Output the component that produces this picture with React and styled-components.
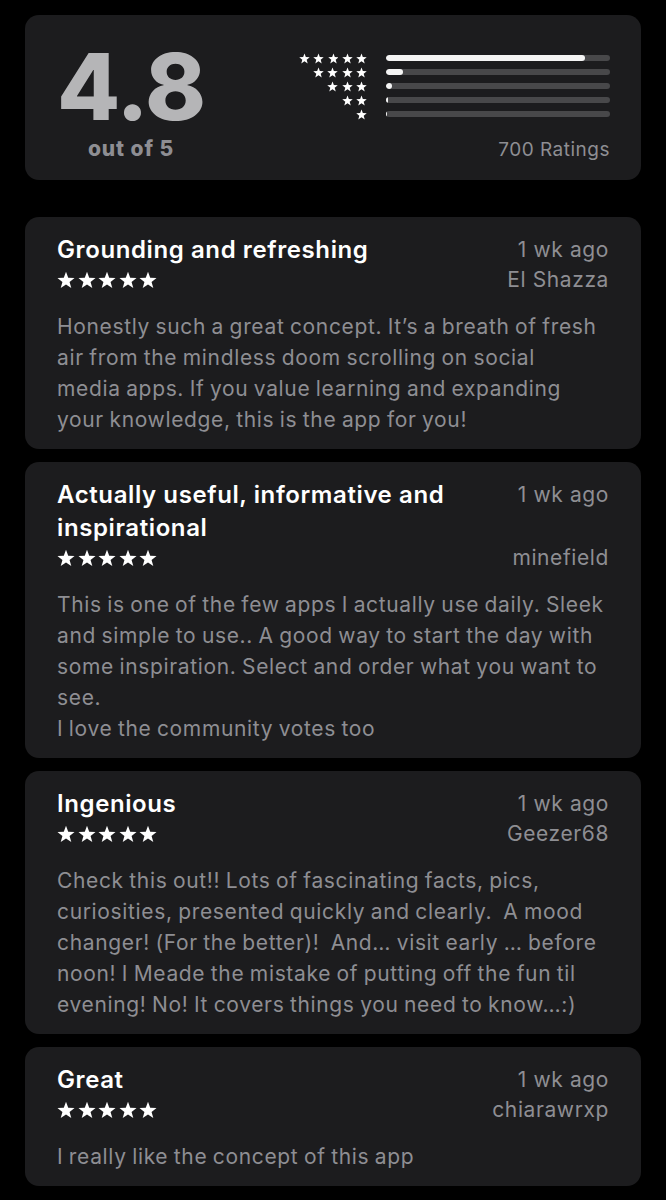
import styled, { createGlobalStyle } from "styled-components"

const Global = createGlobalStyle`
  html, body {
    margin: 0;
    background: #000;
  }
  body {
    font-family: Inter, "Noto Sans", sans-serif;
    -webkit-font-smoothing: antialiased;
  }
`

const Page = styled.main`
  width: 666px;
  box-sizing: border-box;
  padding: 15px 25px 12px;
  display: flex;
  flex-direction: column;
  gap: 13px;
`

const Summary = styled.section`
  background: #1c1c1e;
  border-radius: 14px;
  height: 165px;
  box-sizing: border-box;
  padding: 0 31px 0 31px;
  display: flex;
  margin-bottom: 24px;
`

const ScoreCol = styled.div`
  width: 150px;
  display: flex;
  flex-direction: column;
  align-items: center;
  padding-top: 32px;
`

const Score = styled.div`
  font-size: 92px;
  line-height: 80px;
  font-weight: 800;
  color: #b5b5b7;
  letter-spacing: -1px;
`

const OutOf = styled.div`
  margin-top: 10px;
  font-size: 21px;
  line-height: 24px;
  font-weight: 800;
  color: #8e8e93;
  letter-spacing: 0.9px;
`

const HistCol = styled.div`
  margin-left: auto;
  width: 311px;
  padding-top: 36px;
  display: flex;
  flex-direction: column;
`

const Histogram = styled.div`
  display: grid;
  grid-template-columns: 68px 1fr;
  column-gap: 19px;
  grid-auto-rows: 14px;
  align-items: center;
`

const Track = styled.div`
  height: 6px;
  border-radius: 3px;
  background: #48484a;
  overflow: hidden;
`

const Fill = styled.div`
  height: 100%;
  border-radius: 3px;
  background: #f4f4f4;
`

const RatingsCount = styled.div`
  margin-top: 17px;
  text-align: right;
  font-size: 19px;
  line-height: 24px;
  letter-spacing: 0.5px;
  color: #8e8e93;
`

const Stars = styled.div`
  display: flex;
  justify-content: ${(p) => (p.$end ? "flex-end" : "flex-start")};
  gap: ${(p) => p.$gap}px;
  height: ${(p) => p.$size}px;
`

const StarSvg = styled.svg`
  width: ${(p) => p.$size}px;
  height: ${(p) => p.$size}px;
  display: block;
  fill: #fff;
`

const Card = styled.article`
  background: #1c1c1e;
  border-radius: 14px;
  padding: 16px 32px 14px;
`

const Head = styled.div`
  display: grid;
  grid-template-columns: 1fr auto;
  column-gap: 30px;
  align-items: center;
`

const Title = styled.h2`
  margin: 0;
  font-size: 24px;
  line-height: 33px;
  font-weight: 600;
  letter-spacing: 0.6px;
  color: #fff;
  align-self: start;
`

const Meta = styled.div`
  font-size: 21px;
  line-height: ${(p) => p.$lh}px;
  letter-spacing: 0.6px;
  color: #8e8e93;
  text-align: right;
  align-self: ${(p) => p.$self || "center"};
`

const StarCell = styled.div`
  height: 28px;
  display: flex;
  align-items: center;
`

const Body = styled.p`
  margin: 17px 3px 0 0;
  font-size: 21px;
  line-height: 31px;
  letter-spacing: 0.65px;
  word-spacing: -1px;
  color: #8e8e93;
  white-space: pre-wrap;
`

function Star({ size }) {
  return (
    <StarSvg $size={size} viewBox="0 0 24 24">
      <path d="M12 1L14.94 8.95L23.41 9.29L16.76 14.55L19.05 22.71L12 18L4.95 22.71L7.24 14.55L0.59 9.29L9.06 8.95Z" />
    </StarSvg>
  )
}

function StarRow({ count, size, gap, end }) {
  return (
    <Stars $size={size} $gap={gap} $end={end}>
      {Array.from({ length: count }).map((_, i) => (
        <Star key={i} size={size} />
      ))}
    </Stars>
  )
}

const bars = [
  { stars: 5, pct: 89 },
  { stars: 4, pct: 7.4 },
  { stars: 3, pct: 2.6 },
  { stars: 2, pct: 1 },
  { stars: 1, pct: 0.6 },
]

// line breaks kept where the phone wrapped them
const reviews = [
  {
    title: "Grounding and refreshing",
    date: "1 wk ago",
    user: "El Shazza",
    text: "Honestly such a great concept. It’s a breath of fresh air from the mindless doom scrolling on social\nmedia apps. If you value learning and expanding\nyour knowledge, this is the app for you!",
  },
  {
    title: "Actually useful, informative and inspirational",
    date: "1 wk ago",
    user: "minefield",
    text: "This is one of the few apps I actually use daily. Sleek and simple to use.. A good way to start the day with some inspiration. Select and order what you want to see.\nI love the community votes too",
  },
  {
    title: "Ingenious",
    date: "1 wk ago",
    user: "Geezer68",
    text: "Check this out!! Lots of fascinating facts, pics, curiosities, presented quickly and clearly.  A mood changer! (For the better)!  And… visit early … before noon! I Meade the mistake of putting off the fun til evening! No! It covers things you need to know…:)",
  },
  {
    title: "Great",
    date: "1 wk ago",
    user: "chiarawrxp",
    text: "I really like the concept of this app",
  },
]

export default function App() {
  return (
    <>
      <Global />
      <Page>
        <Summary>
          <ScoreCol>
            <Score>4.8</Score>
            <OutOf>out of 5</OutOf>
          </ScoreCol>
          <HistCol>
            <Histogram>
              {bars.map((b) => [
                <StarRow key={"s" + b.stars} count={b.stars} size={11} gap={3.3} end />,
                <Track key={"t" + b.stars}>
                  <Fill style={{ width: b.pct + "%" }} />
                </Track>,
              ])}
            </Histogram>
            <RatingsCount>700 Ratings</RatingsCount>
          </HistCol>
        </Summary>

        {reviews.map((r) => (
          <Card key={r.title}>
            <Head>
              <Title>{r.title}</Title>
              <Meta $lh={33} $self="start">{r.date}</Meta>
              <StarCell>
                <StarRow count={5} size={18} gap={2.5} />
              </StarCell>
              <Meta $lh={28}>{r.user}</Meta>
            </Head>
            <Body>{r.text}</Body>
          </Card>
        ))}
      </Page>
    </>
  )
}
